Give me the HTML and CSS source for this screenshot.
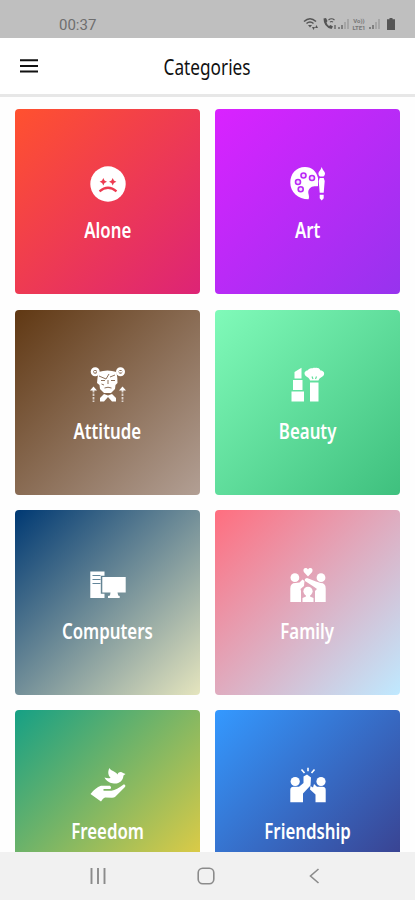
FILE: index.html
```html
<!DOCTYPE html>
<html lang="en">
<head>
    <meta charset="UTF-8">
    <meta name="viewport" content="width=device-width, initial-scale=1.0">
    <title>Categories</title>
    <link rel="stylesheet" href="styles.css">
</head>
<body>
    <div class="status-bar">
        <span class="clock">00:37</span>
        <div class="status-icons">
            <svg class="wifi" width="17" height="14" viewBox="0 0 17 14">
                <path d="M1 4.5Q7 -1 13 4.5M3.5 6.5Q7 3.5 10.5 6.5" fill="none" stroke="currentColor" stroke-width="1.5"/>
                <path d="M5 8h4l-2 2.5zM9 10h3l-1.5 3zM12 11l1.5-3 1.5 3z" fill="currentColor"/>
            </svg>
            <svg class="call" width="15" height="14" viewBox="0 0 15 14">
                <path d="M1.500 1.500Q1.500 10 9.500 12l1.500-2.500-2.500-1.500-1.500 1Q5 7.500 4.500 5.500L5.500 4 4 1z" fill="currentColor"/>
                <path d="M6.500 3Q9.500 .5 12.500 3M8 5Q9.500 4 11 5M13 8v4" fill="none" stroke="currentColor" stroke-width="1.200"/>
            </svg>
            <svg class="signal" width="13" height="14" viewBox="0 0 13 14">
                <path d="M2 12v-2M5 12V8" stroke="#6b6b6b" stroke-width="1.500"/>
                <path d="M8 12V5M11 12V2" stroke="#999" stroke-width="1.300"/>
            </svg>
            <span class="volte"><span>Vo))</span><span>LTE1</span></span>
            <svg class="signal" width="13" height="14" viewBox="0 0 13 14">
                <path d="M2 12v-2M5 12V8" stroke="#6b6b6b" stroke-width="1.500"/>
                <path d="M8 12V5M11 12V2" stroke="#999" stroke-width="1.300"/>
            </svg>
            <svg class="battery" width="8" height="12" viewBox="0 0 8 12">
                <path d="M2.500 0h3v1.300H8V12H0V1.300h2.500z" fill="currentColor"/>
            </svg>
        </div>
    </div>

    <header class="app-header">
        <svg class="menu" width="18" height="14" viewBox="0 0 18 14">
            <path d="M0 1.200h18M0 7h18M0 12.600h18" stroke="#111" stroke-width="2"/>
        </svg>
        <h1><span>Categories</span></h1>
    </header>

    <main class="grid">
        <div class="card alone">
            <svg class="icon" viewBox="0 0 36 36">
                <circle cx="18" cy="18" r="17.700"/>
                <path class="cut" d="M13.300 12l1.200 2.500 2.500 1.200-2.500 1.200-1.200 2.500-1.200-2.500-2.500-1.200 2.500-1.200zM22.700 12l1.200 2.500 2.500 1.200-2.500 1.200-1.200 2.500-1.200-2.500-2.500-1.200 2.500-1.200z"/>
                <path class="cut-line" d="M9.500 25.300Q18 18.200 26.500 25.300"/>
            </svg>
            <span class="label">Alone</span>
        </div>
        <div class="card art">
            <svg class="icon" viewBox="0 0 36 36">
                <path d="M15 1C6 1 .3 8 .3 16.500.300 26 8 33.300 18.500 33.300c1-1.800.300-4-.200-6.300-.300-4 2.500-6.500 6.200-6.700 1.700 0 3 0 3.500-.400V12C26.500 5.500 22 1 15 1z"/>
                <g class="rings">
                    <circle cx="13.500" cy="9.500" r="2.500"/>
                    <circle cx="22" cy="12" r="2.500"/>
                    <circle cx="8" cy="16" r="2.500"/>
                    <circle cx="10.700" cy="23.300" r="2.500"/>
                </g>
                <path d="M31.700 1c-.700 3-3.300 4.500-3.300 6.500 0 1.500 1 2.500 1.500 3h3.600c.500-.500 1.500-1.500 1.500-3 0-2-2.600-3.500-3.300-6.500zM29.700 12h4l1 3-1 11.700h-4L28.700 15zM29.700 28.700h4v3.500l-2 2.300-2-2.300z"/>
            </svg>
            <span class="label">Art</span>
        </div>
        <div class="card attitude">
            <svg class="icon" viewBox="0 0 36 36">
                <circle cx="5.200" cy="4.800" r="3.200" class="bun"/>
                <circle cx="30.500" cy="4.800" r="3.200" class="bun"/>
                <path d="M4 4h2.400v1.500H4zM29 4h3v1.500h-3z"/>
                <path d="M8.500 5Q17.500 2 26.500 5l.800 6 .200 5-2 2-.500 4-4 4h-7l-4-4-.500-4L7 16l.500-5z"/>
                <path class="detail" d="M9 9l7 3 3-5M11 13.500h4M21 13.500h4M20 10l5-2M18 13v4M14.500 21q3.500-1.500 7 0M11.500 17l2.500 1"/>
                <path d="M14 27l4 1.500L22 27l4 4v3.500h-4L18 30l-4 4.500h-4V31z"/>
                <path d="M0 23.500l3.500-4 3.500 4zM29 23.500l3.500-4 3.500 4z"/>
                <path class="dashes" d="M3.500 23v12M32.500 23v12"/>
            </svg>
            <span class="label">Attitude</span>
        </div>
        <div class="card beauty">
            <svg class="icon" viewBox="0 0 36 36">
                <path d="M4.500 5L11.500 .800V11.500h-7zM3 13h9.500v10H3zM1.500 24.500H14v10H1.500z"/>
                <path d="M15 8c-1.500-3 1-4.500 2.500-4.500C19 1 21.500 1.500 23 1c1 0 1.500-.500 2 0 2-.500 4.500 0 5.500 2.500 3 0 4.500 2.500 3.200 4.800-1.500 2.300-4 2-5.200 5.200h-8.500C19.200 10 16 10 15 8zM20 15.500h8.500v19H20z"/>
                <path class="cut-line thin" d="M22 9.500l1 2.500M26.500 9.500l-1 2.500"/>
            </svg>
            <span class="label">Beauty</span>
        </div>
        <div class="card computers">
            <svg class="icon" viewBox="0 0 36 36">
                <path d="M.300 4.500h14.200v4.300h-3.700v18h3.700V31H.300z"/>
                <path class="cut-line thin" d="M2.500 8.500h8M2.500 12.500h8M2.500 16.500h8"/>
                <path d="M12.300 10h23.400v15.500H12.300zM20.500 25.500h7l.700 3 1.500.500V31H18v-2l2-.500z"/>
            </svg>
            <span class="label">Computers</span>
        </div>
        <div class="card family">
            <svg class="icon" viewBox="0 0 36 36">
                <path d="M18 9.500l-4-4.300C12 1.500 16-.500 18 2.500c2-3 6-1 4 2.700z"/>
                <circle cx="4.900" cy="10.700" r="4.400"/>
                <circle cx="31" cy="10.700" r="4.400"/>
                <path d="M.300 35V21.500q0-5.500 5-5.500l4.200-.500 3-3 2 1.500-.500 5-3.500 3L11 24v11zM35.700 35V21.500q0-5.500-5-5.500L26 14.500 17 11q-3 .500-2 3l8.500 5.500L27 22l-2 2v11z"/>
                <circle cx="18" cy="24.300" r="4.600"/>
                <path d="M15.500 27h5l-.500 2.500 3.500 1.500v4h-11v-4l3.500-1.500z"/>
            </svg>
            <span class="label">Family</span>
        </div>
        <div class="card freedom">
            <svg class="icon" viewBox="0 0 36 36">
                <path d="M14.500 10.500c4 1.500 6 .500 6 0-2.500-2-3-6-1-9.500 1 3 6 3 8 6.500 1-3 4-3 5.500-1.500L35.500 7l-2 1.500C33 14 29 17 24 16.500c-4-.500-7.500-2-9.500-6z"/>
                <path d="M.500 27Q5 21 11 18.800h9q2 1.500.500 3.200h-7v1.800h8q5-1 12.500-6.500 2 .500 1.200 2.500L25 30q-1 .800-3 .800l-7-.300q-2 .500-4 4z"/>
            </svg>
            <span class="label">Freedom</span>
        </div>
        <div class="card friendship">
            <svg class="icon" viewBox="0 0 36 36">
                <path class="rays" d="M11.500 2.500l3 3.500M18 .800v3.500M24.500 2.500l-3 3.500"/>
                <circle cx="5.200" cy="14.500" r="4.600"/>
                <circle cx="31" cy="14.500" r="4.600"/>
                <path d="M.300 35.200V23q0-3.300 3.300-3.300H9L13.500 16V9.500L17 7.500l4 3-.500 8-7.500 8v8.700zM35.700 35.200V23q0-3.300-3.300-3.300H27L24 17l-1 3.500-2.500-1.500-.500 3.500 5.500 5v7.700z"/>
            </svg>
            <span class="label">Friendship</span>
        </div>
    </main>

    <nav class="nav-bar">
        <svg width="20" height="20" viewBox="0 0 20 20">
            <path d="M3.500 2v16M10 2v16M16.500 2v16" stroke-width="1.900"/>
        </svg>
        <svg width="20" height="20" viewBox="0 0 20 20">
            <rect x="2.200" y="2.200" width="15.600" height="15.600" rx="4.500" stroke-width="1.600"/>
        </svg>
        <svg width="20" height="20" viewBox="0 0 20 20">
            <path d="M14.500 3L6.500 10l8 7" stroke-width="1.600"/>
        </svg>
    </nav>
</body>
</html>
```

FILE: styles.css
```css
* {
    margin: 0;
    padding: 0;
    box-sizing: border-box;
}

body {
    height: 900px;
    display: flex;
    flex-direction: column;
    overflow: hidden;
    background-color: #fefefe;
    font-family: 'Noto Sans', 'Open Sans', sans-serif;
}

.status-bar {
    flex: none;
    height: 38px;
    padding: 11px 20px 0 59px;
    display: flex;
    justify-content: space-between;
    background-color: #bfbfbf;
    color: #555;
}

.clock {
    font-family: Roboto, sans-serif;
    font-size: 15px;
    line-height: 28px;
    color: #6e6e6e;
}

.status-icons {
    height: 26px;
    display: flex;
    align-items: center;
}

.call {
    margin-left: 2px;
}

.volte {
    width: 18px;
    display: flex;
    flex-direction: column;
    align-items: center;
    font-family: Roboto, sans-serif;
    font-size: 6px;
    font-weight: 700;
    line-height: 7px;
    color: #777;
}

.battery {
    margin-left: 6px;
}

.app-header {
    flex: none;
    height: 59px;
    padding: 0 20px;
    display: grid;
    grid-template-columns: 18px 1fr 18px;
    align-items: center;
    border-bottom: 3px solid #e7e7e7;
    background-color: #fff;
}

h1 {
    padding-top: 2px;
    text-align: center;
    font-size: 21px;
    font-weight: 400;
    line-height: 28px;
    color: #111;
}

h1 span {
    display: inline-block;
    transform: scaleX(0.82);
}

.grid {
    flex: 1;
    min-height: 0;
    overflow: hidden;
    padding: 12.4px 15px 0;
    display: grid;
    grid-template-columns: 1fr 1fr;
    grid-auto-rows: 185px;
    align-content: start;
    gap: 15.3px 15px;
}

.card {
    display: flex;
    flex-direction: column;
    align-items: center;
    padding-top: 57px;
    border-radius: 4px;
    background-image: linear-gradient(135deg, var(--from), var(--to));
}

.alone { --from: #ff512f; --to: #dd2476; --cut: #ed3a50; }
.art { --from: #da22ff; --to: #9733ee; --cut: #ba2af6; }
.attitude { --from: #603813; --to: #b29f94; --cut: #80624a; }
.beauty { --from: #80fab9; --to: #3fc07e; --cut: #63e09e; }
.computers { --from: #003973; --to: #e5e5be; --cut: #63869a; }
.family { --from: #ff6e7f; --to: #bfe9ff; --cut: #e2a5b8; }
.freedom { --from: #16a085; --to: #f4d03f; --cut: #7ab667; }
.friendship { --from: #3499ff; --to: #3a3985; --cut: #376cc4; }

.icon {
    width: 36px;
    height: 36px;
    fill: #fff;
}

.cut {
    fill: var(--cut);
}

.cut-line {
    fill: none;
    stroke: var(--cut);
    stroke-width: 2.2;
}

.thin {
    stroke-width: 1.2;
}

.rings {
    fill: #f5e0ff;
    stroke: var(--cut);
    stroke-width: 1.6;
}

.bun {
    fill: none;
    stroke: #fff;
    stroke-width: 2.6;
}

.detail {
    fill: none;
    stroke: var(--cut);
    stroke-width: 0.9;
}

.dashes {
    stroke: #fff;
    stroke-width: 1.8;
    stroke-dasharray: 2.5 1;
    opacity: 0.7;
}

.rays {
    stroke: #fff;
    stroke-width: 1.6;
}

.label {
    margin-top: 13px;
    font-size: 22px;
    font-weight: 600;
    line-height: 28px;
    color: #fff;
    transform: scaleX(0.765);
}

.nav-bar {
    flex: none;
    height: 48px;
    padding: 0 91px 0 88px;
    display: flex;
    align-items: center;
    justify-content: space-between;
    background-color: #f1f1f1;
}

.nav-bar svg {
    fill: none;
    stroke: #8b8b8b;
}
```
